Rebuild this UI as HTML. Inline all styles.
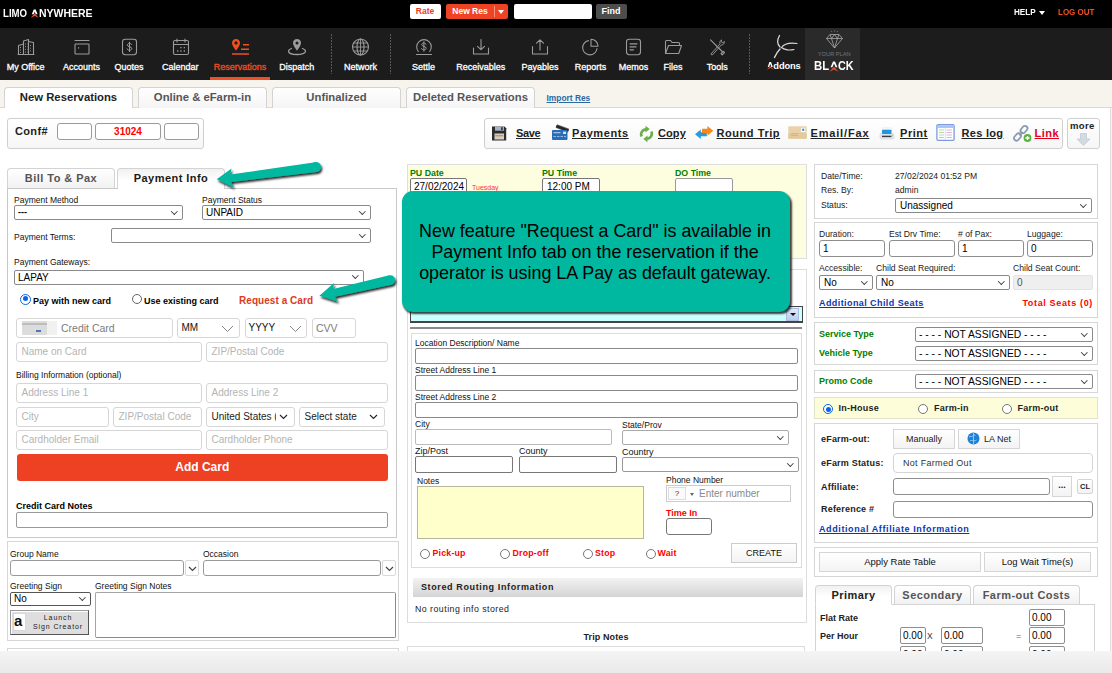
<!DOCTYPE html>
<html><head><meta charset="utf-8"><title>Limo Anywhere</title>
<style>
*{box-sizing:border-box;margin:0;padding:0}
html,body{width:1112px;height:673px;overflow:hidden;background:#fff;font-family:"Liberation Sans",sans-serif;}
#root{position:relative;width:1112px;height:673px;overflow:hidden;background:#fff;font-size:9px;color:#000}
#root *{position:absolute;white-space:nowrap}
.abs{position:absolute}
/* top */
#top{left:0;top:0;width:1112px;height:28px;background:#000}
#nav{left:0;top:28px;width:1112px;height:52px;background:#1c1c1c}
#strip{left:0;top:80px;width:1112px;height:28px;background:#f7f4ed;border-bottom:1px solid #d9d9d9}
.nl{color:#fff;font-size:9px;top:62px;text-align:center;width:70px;margin-left:-35px;-webkit-text-stroke:0.3px #fff}
.tab{top:87px;height:21px;border:1px solid #d3d3d3;border-bottom:0;border-radius:4px 4px 0 0;background:linear-gradient(#fff,#f5f5f5);font-weight:bold;font-size:11.3px;color:#555;text-align:center;line-height:19px}
.tab.on{background:#fff;color:#222}
.box{border:1px solid #d0d0d0;background:#fff}
.lb{font-size:8.5px;color:#111;letter-spacing:0}
.in{border:1px solid #8a8a8a;border-radius:2px;background:#fff;font-size:11px;line-height:13px;padding-left:3px}
.sel{border:1px solid #8a8a8a;border-radius:2px;background:#fff;font-size:11px;padding-left:3px}
.sel:after{content:"";position:absolute;right:5px;top:50%;width:3.6px;height:3.6px;border-right:1.1px solid #3a3a3a;border-bottom:1.1px solid #3a3a3a;transform:translateY(-4px) rotate(45deg)}
.ph{border:1px solid #d6d6d6;border-radius:3px;background:#fff;font-size:10px;color:#b4b4b4;padding-left:4.5px;line-height:18px;height:20px}
.vb{font-weight:bold;font-size:11px;letter-spacing:0.35px}
.u{text-decoration:underline}
.g{color:#008000;font-weight:bold}
.r{color:#f00;font-weight:bold}
.radio{width:10px;height:10px;border:1px solid #666;border-radius:50%;background:#fff}
.radio.on{border-color:#0a63e6}
.radio.on:after{content:"";position:absolute;left:1.5px;top:1.5px;width:5px;height:5px;border-radius:50%;background:#0a63e6}
.btn{border:1px solid #d5d5d5;background:linear-gradient(#fff,#f3f3f3);font-size:10px;text-align:center;color:#222}
.stab{border:1px solid #d3d3d3;border-bottom:0;border-radius:4px 4px 0 0;background:linear-gradient(#fff,#f1f1f1);font-weight:bold;font-size:11px;letter-spacing:0.45px;text-align:center;line-height:18px}
.stab.on{background:linear-gradient(#f1f1f1,#fff 60%)}
</style></head><body><div id="root">
<!-- TOP BAR -->
<div id="top"></div>
<div id="nav"></div>
<div id="strip"></div>

<div style="left:3px;top:7px;color:#fff;font-weight:bold;font-size:11px;line-height:13px;transform:scaleX(0.875);transform-origin:0 0">LIMO</div>
<div style="left:38.600px;top:7px;color:#fff;font-weight:bold;font-size:11px;line-height:13px;transform:scaleX(0.953);transform-origin:0 0">NYWHERE</div>
<svg style="left:30px;top:9px" width="10" height="10" viewBox="0 0 10 10"><path d="M1.800 5.200L3.700 0.600H5.700L7.600 5.200H5.700L4.700 2.700 3.700 5.200Z" fill="#fff"/><path d="M0.700 8.800L4.700 4.300 8.700 8.800 4.700 7.100Z" fill="#f04e23"/></svg>
<div style="left:409.5px;top:4px;width:31px;height:15.3px;background:#fff;border-radius:2px;color:#e8401f;font-weight:bold;font-size:8.5px;line-height:15.5px;text-align:center">Rate</div>
<div style="left:446px;top:4px;width:62px;height:15.300px;background:#ee4423;border-radius:2px"></div>
<div style="left:447px;top:4px;width:46px;height:15px;color:#fff;font-weight:bold;font-size:8.500px;line-height:15.500px;text-align:center">New Res</div>
<div style="left:493.500px;top:6px;width:1px;height:11px;background:#f7937c"></div>
<div style="left:497.500px;top:10px;width:0;height:0;border:3.500px solid transparent;border-top:4px solid #fff;border-bottom:0"></div>
<div style="left:513.500px;top:4px;width:78px;height:15.300px;background:#fff;border-radius:2px"></div>
<div style="left:595.500px;top:4px;width:31px;height:15.300px;background:#4d4d4d;border-radius:2px;color:#fff;font-weight:bold;font-size:9px;line-height:15px;text-align:center">Find</div>
<div style="left:1014px;top:6px;color:#fff;font-weight:bold;font-size:9px;line-height:12px;transform:scaleX(0.9);transform-origin:0 0">HELP</div>
<div style="left:1039px;top:11px;width:0;height:0;border:3.5px solid transparent;border-top:4px solid #fff;border-bottom:0"></div>
<div style="left:1057.500px;top:6px;color:#f04e23;font-weight:bold;font-size:9px;line-height:12px;transform:scaleX(0.89);transform-origin:0 0">LOG OUT</div>
<!--TOPCONTENT-->
<svg style="left:17px;top:38px" width="18" height="18" viewBox="0 0 18 18" fill="none" stroke="#9b9b9b" stroke-width="1.1" stroke-linecap="round" stroke-linejoin="round"><path d="M1.5 16.5V7.5l5-1.5v10.5M6.5 16.5V3l5-1.5v15M11.5 3.5l5 1v12M1 16.5h16"/><path d="M3 9.5h2M3 12h2M3 14.500h2M8 6h2.500M8 8.700h2.500M8 11.400h2.500M8 14.100h2.500M13 7.500h2M13 10.200h2M13 12.900h2" stroke-width="1" stroke-dasharray="0.9 1.1" stroke-linecap="butt"/></svg><svg style="left:73px;top:38px" width="18" height="18" viewBox="0 0 18 18" fill="none" stroke="#9b9b9b" stroke-width="1.1" stroke-linecap="round" stroke-linejoin="round"><path d="M2 2.500h14"/><rect x="2" y="6" width="14" height="10" rx="0.8"/><rect x="5" y="9.300" width="1.2" height="1.200" fill="#9b9b9b" stroke="none"/></svg><svg style="left:121px;top:38px" width="17" height="18" viewBox="0 0 17 18" fill="none" stroke="#9b9b9b" stroke-width="1.1" stroke-linecap="round" stroke-linejoin="round"><rect x="1.500" y="1.200" width="14" height="15.500" rx="2.600"/><path d="M10.600 6.700c-0.300-0.900-1.100-1.300-2.100-1.300-1.200 0-2.100 0.600-2.100 1.600 0 2.400 4.400 1.200 4.400 3.600 0 1-0.900 1.700-2.300 1.700-1.200 0-2.100-0.500-2.400-1.500M8.500 4.200v9.400" stroke-width="1"/></svg><svg style="left:172px;top:38px" width="18" height="18" viewBox="0 0 18 18" fill="none" stroke="#9b9b9b" stroke-width="1.1" stroke-linecap="round" stroke-linejoin="round"><rect x="1.500" y="2.500" width="15" height="14" rx="1.500"/><path d="M1.500 6.500h15M5 1v3M13 1v3"/><path d="M8.300 9.700h1.300M11.700 9.700h1.300M5 13h1.300M8.300 13h1.300M11.700 13h1.300" stroke-width="1.300" stroke-linecap="butt"/></svg><svg style="left:231px;top:38px" width="19" height="18" viewBox="0 0 19 18" fill="none" stroke="#f04e23" stroke-width="1.1" stroke-linecap="round" stroke-linejoin="round"><path d="M5 1C2.800 1 1 2.700 1 4.900 1 7.700 5 12.500 5 12.500S9 7.700 9 4.900C9 2.700 7.200 1 5 1z" fill="#f04e23" stroke="none"/><circle cx="5" cy="4.900" r="1.600" fill="#1c1c1c" stroke="none"/><path d="M12 6.700h6M10 11.200h8M1 16h17" stroke-width="1.500" stroke-linecap="butt"/></svg><svg style="left:287px;top:38px" width="20" height="18" viewBox="0 0 20 18" fill="none" stroke="#9b9b9b" stroke-width="1.1" stroke-linecap="round" stroke-linejoin="round"><path d="M10 1C7.800 1 6 2.700 6 4.900 6 7.700 10 12.500 10 12.500s4-4.800 4-7.600C14 2.700 12.200 1 10 1z" fill="#9b9b9b" stroke="none"/><circle cx="10" cy="4.900" r="1.500" fill="#1c1c1c" stroke="none"/><path d="M4.500 10.500C2.500 11.200 1.500 12.200 1.500 13.200c0 1.900 3.800 3.300 8.500 3.300s8.500-1.400 8.500-3.300c0-1-1-2-3-2.700" stroke-width="1.300"/></svg><svg style="left:351px;top:38px" width="19" height="18" viewBox="0 0 19 18" fill="none" stroke="#9b9b9b" stroke-width="1.1" stroke-linecap="round" stroke-linejoin="round"><circle cx="9.500" cy="9" r="8"/><ellipse cx="9.500" cy="9" rx="3.500" ry="8"/><path d="M1.500 9h16M2.600 5h13.800M2.600 13h13.800M9.500 1v16" stroke-width="0.900"/></svg><svg style="left:415px;top:38px" width="18" height="18" viewBox="0 0 18 18" fill="none" stroke="#9b9b9b" stroke-width="1.1" stroke-linecap="round" stroke-linejoin="round"><path d="M3.300 13.500A7.300 7.300 0 1 1 14.700 13.500"/><path d="M1.500 16.500h15"/><path d="M11 6.300c-0.300-0.900-1.100-1.300-2.100-1.300-1.200 0-2.100 0.600-2.100 1.600 0 2.400 4.400 1.200 4.400 3.600 0 1-0.900 1.700-2.300 1.700-1.200 0-2.100-0.500-2.400-1.500M8.900 3.800v9.400" stroke-width="1"/></svg><svg style="left:472px;top:38px" width="18" height="18" viewBox="0 0 18 18" fill="none" stroke="#9b9b9b" stroke-width="1.1" stroke-linecap="round" stroke-linejoin="round"><path d="M1.500 10v6h15v-6M9 1.500v10M5.500 8.300L9 11.700l3.500-3.400"/></svg><svg style="left:531px;top:38px" width="18" height="18" viewBox="0 0 18 18" fill="none" stroke="#9b9b9b" stroke-width="1.1" stroke-linecap="round" stroke-linejoin="round"><path d="M1.500 8.500v7.500h15V8.500M9 12V2M5.500 5.200L9 1.800l3.500 3.400"/></svg><svg style="left:581px;top:38px" width="18" height="18" viewBox="0 0 18 18" fill="none" stroke="#9b9b9b" stroke-width="1.1" stroke-linecap="round" stroke-linejoin="round"><path d="M7.500 2.600A7.200 7.200 0 1 0 16 10.500"/><path d="M10 1.200v7h7A7 7 0 0 0 10 1.200z"/></svg><svg style="left:625px;top:38px" width="17" height="18" viewBox="0 0 17 18" fill="none" stroke="#9b9b9b" stroke-width="1.1" stroke-linecap="round" stroke-linejoin="round"><rect x="1.500" y="1.200" width="14" height="15.500" rx="2.600"/><path d="M5 5.800h7M5 8.800h6M5 11.800h3.500" stroke-width="1.200"/></svg><svg style="left:664px;top:38px" width="19" height="18" viewBox="0 0 19 18" fill="none" stroke="#9b9b9b" stroke-width="1.1" stroke-linecap="round" stroke-linejoin="round"><path d="M1.500 15.500V3.500c0-0.600 0.400-1 1-1h4l1.500 2h6.500c0.600 0 1 0.400 1 1v1.500"/><path d="M1.500 15.500l3-8h13l-2.800 8z"/></svg><svg style="left:708px;top:38px" width="18" height="18" viewBox="0 0 18 18" fill="none" stroke="#9b9b9b" stroke-width="1.1" stroke-linecap="round" stroke-linejoin="round"><path d="M2.500 1.800L14.200 13.500M13 15.600l2.300-2.300 1.200 1.200-2.300 2.300z"/><path d="M3.300 15.700L12 5.800c-0.500-1.600 0.200-3.200 1.500-3.900l-0.300 2 1.600 0.800 1.600-1.200c0.300 1.600-0.900 3.300-3.100 3.500L4.500 16.800c-0.800 0.700-1.900-0.300-1.200-1.100z" stroke-width="0.900"/></svg><svg style="left:772px;top:34px" width="27" height="25" viewBox="0 0 27 25" fill="none" stroke="#d8d8d8" stroke-linecap="round"><path d="M7.500 1.500C5 6 5 10 8 13" stroke-width="1.300"/><path d="M25 9.500C18 8.500 12 10 9.500 13.500 12 16 18 16.500 22 15.500" stroke-width="1.200"/><path d="M8 15C6 17 4 20 2.500 23.500" stroke-width="1.400"/></svg><div style="left:805px;top:28px;width:55px;height:52px;background:#2a2a2a"></div><svg style="left:826px;top:30px" width="17" height="19" viewBox="0 0 17 19" fill="none" stroke="#a9a9a9" stroke-width="0.800" stroke-linejoin="round"><path d="M4 4.500h9l3.500 4L8.500 18 0.500 8.500zM0.500 8.500h16M5.500 8.500L8.500 18l3-9.500M4 4.500l1.500 4L8.500 4.500l3 4 1.500-4"/><path d="M8.500 0.500v1M5.500 1.200l0.400 0.900M11.500 1.200l-0.400 0.900" stroke-width="0.700"/></svg><div style="left:805px;top:50px;width:55px;text-align:center;font-size:5.700px;line-height:8px;color:#777;letter-spacing:0;padding-left:3.500px">YOUR PLAN</div><div style="left:814px;top:58.200px;color:#fff;font-weight:bold;font-size:13.500px;line-height:16px;transform:scaleX(0.84);transform-origin:0 0">BL</div><div style="left:838.200px;top:58.200px;color:#fff;font-weight:bold;font-size:13.500px;line-height:16px;transform:scaleX(0.80);transform-origin:0 0">CK</div><svg style="left:828px;top:60.700px" width="12" height="12" viewBox="0 0 12 12"><path d="M2.600 6.300L5 0.600H7L9.400 6.300H7.600L6 2.600 4.400 6.300Z" fill="#fff"/><path d="M1.400 10.800L6 5.800 10.600 10.800 6 8.400Z" fill="#f04e23"/></svg><div style="left:773.300px;top:60px;color:#fff;font-weight:bold;font-size:9.300px;line-height:13px;letter-spacing:-0.100px">ddons</div><svg style="left:766px;top:61px" width="9" height="10" viewBox="0 0 9 10"><path d="M1.700 6L3.400 1H5.100L6.800 6H5.300L4.250 2.800 3.200 6Z" fill="#fff"/><path d="M0.700 8.800L4.250 5.200 7.800 8.800 4.250 7.100Z" fill="#f04e23"/></svg><div style="left:331px;top:34px;width:1px;height:40px;background:repeating-linear-gradient(#575757 0 2px,transparent 2px 3px)"></div><div style="left:390px;top:34px;width:1px;height:40px;background:repeating-linear-gradient(#575757 0 2px,transparent 2px 3px)"></div><div style="left:749px;top:34px;width:1px;height:40px;background:repeating-linear-gradient(#575757 0 2px,transparent 2px 3px)"></div><div class="nl" style="left:25.7px">My Office</div><div class="nl" style="left:81.6px">Accounts</div><div class="nl" style="left:129.1px">Quotes</div><div class="nl" style="left:180.3px">Calendar</div><div class="nl" style="left:240.1px;color:#f04e23;-webkit-text-stroke-color:#f04e23">Reservations</div><div class="nl" style="left:296.7px">Dispatch</div><div class="nl" style="left:360.5px">Network</div><div class="nl" style="left:423.4px">Settle</div><div class="nl" style="left:480.8px">Receivables</div><div class="nl" style="left:540px">Payables</div><div class="nl" style="left:590.5px">Reports</div><div class="nl" style="left:633.6px">Memos</div><div class="nl" style="left:673.1px">Files</div><div class="nl" style="left:717.3px">Tools</div><div style="left:210px;top:77px;width:60px;height:3px;background:#f04e23"></div>
<!--NAV-->
<div class="tab on" style="left:4px;width:129px">New Reservations</div><div class="tab" style="left:138px;width:129px">Online &amp; eFarm-in</div><div class="tab" style="left:272px;width:129px">Unfinalized</div><div class="tab" style="left:406px;width:129px">Deleted Reservations</div><div style="left:546.500px;top:93px;font-size:8.400px;font-weight:bold;color:#2a6aa6;text-decoration:underline;line-height:10px">Import Res</div><div class="box" style="left:7px;top:118px;width:197px;height:31px;border-radius:3px;background:linear-gradient(#fff,#f6f6f6);border-color:#cfcfcf"></div><div class="vb" style="left:15px;top:125px;line-height:13px;color:#222">Conf#</div><div class="in" style="left:57px;top:123px;width:35px;height:17px;border-color:#9a9a9a;border-radius:3px"></div><div class="in" style="left:95px;top:123px;width:66px;height:17px;border-color:#9a9a9a;border-radius:3px"></div><div class="in" style="left:164px;top:123px;width:35px;height:17px;border-color:#9a9a9a;border-radius:3px"></div><div style="left:95px;top:123px;width:66px;height:17px;line-height:17px;text-align:center;color:#f00;font-weight:bold;font-size:10px">31024</div><div class="box" style="left:484px;top:118px;width:579px;height:31px;border-radius:3px;background:linear-gradient(#fff,#f6f6f6);border-color:#cfcfcf"></div><div class="box" style="left:1067px;top:118px;width:33px;height:31px;border-radius:3px;background:linear-gradient(#fff,#f6f6f6);border-color:#cfcfcf"></div><div class="vb u tb" style="left:516px;top:127px;line-height:13px;color:#222;letter-spacing:-0.33px">Save</div><div class="vb u tb" style="left:572px;top:127px;line-height:13px;color:#222;letter-spacing:0.60px">Payments</div><div class="vb u tb" style="left:658px;top:127px;line-height:13px;color:#222;letter-spacing:0.10px">Copy</div><div class="vb u tb" style="left:716.5px;top:127px;line-height:13px;color:#222;letter-spacing:0.56px">Round Trip</div><div class="vb u tb" style="left:810.5px;top:127px;line-height:13px;color:#222;letter-spacing:0.83px">Email/Fax</div><div class="vb u tb" style="left:900px;top:127px;line-height:13px;color:#222;letter-spacing:0.55px">Print</div><div class="vb u tb" style="left:961.5px;top:127px;line-height:13px;color:#222;letter-spacing:0.31px">Res log</div><div class="vb u tb" style="left:1034.5px;top:127px;line-height:13px;color:#e2001a;letter-spacing:0.47px">Link</div><div class="vb" style="left:1070px;top:120px;line-height:12px;font-size:9.5px;color:#222">more</div><svg style="left:1076px;top:133px" width="15" height="13" viewBox="0 0 15 13"><path d="M4.500 0.500h6v5.500h3.500L7.500 12.500 1 6h3.500z" fill="#d5dae1" stroke="#c3cad3" stroke-width="0.800"/></svg>
<svg style="left:491px;top:126px" width="16" height="15" viewBox="0 0 16 15"><path d="M1 0.500h12.500L15.200 2.200V14.500H1z" fill="#2d2d30"/><rect x="4" y="0.500" width="9" height="4.200" fill="#a9b3c2"/><rect x="10" y="1.200" width="1.800" height="2.800" fill="#3a3f4a"/><rect x="3.500" y="7.500" width="9.500" height="6" fill="#d0d0d0"/><rect x="4.300" y="9" width="8" height="1.400" fill="#f08a24"/></svg><svg style="left:551px;top:123px" width="20" height="18" viewBox="0 0 20 18"><g transform="rotate(21 11 5)"><rect x="5" y="3.200" width="13" height="4" rx="0.600" fill="#6a6a6a"/><rect x="5" y="4" width="13" height="2.400" fill="#262626"/></g><rect x="1" y="7" width="15.500" height="10" rx="1" fill="#2a6db5"/><rect x="2.500" y="9" width="7" height="1.300" fill="#9cc3ee"/><rect x="12" y="8.600" width="3" height="2.400" fill="#cfe2f7"/><path d="M2.500 13.500h2.500M6 13.500h2.500M9.500 13.500h2.500M13 13.500h2" stroke="#8fbaea" stroke-width="1"/></svg><svg style="left:639px;top:125px" width="15" height="18" viewBox="0 0 15 18" fill="none" stroke="#6ab04c" stroke-width="2.700"><path d="M2.700 11.500A5 5 0 0 1 7.200 4.300"/><path d="M12.300 6.500A5 5 0 0 1 7.800 13.700"/><path d="M6.500 0.800l4.200 3.300-4.200 3.400z" fill="#6ab04c" stroke="none"/><path d="M8.500 17.200l-4.200-3.300 4.200-3.400z" fill="#6ab04c" stroke="none"/></svg><svg style="left:694px;top:125px" width="20" height="15" viewBox="0 0 20 15"><path d="M1 9.200L6.800 4.500v2.800h6v4h-6v2.800z" fill="#2a9ae0"/><path d="M19.200 5.800L13.400 0.900v2.800H8v4.200h5.400v2.800z" fill="#f28a1e"/></svg><svg style="left:788px;top:126px" width="19" height="13" viewBox="0 0 19 13"><rect x="0.300" y="0.300" width="18.400" height="12.400" rx="1" fill="#e9d2aa"/><rect x="0.300" y="7" width="18.400" height="5.700" rx="1" fill="#e3c99c"/><rect x="13.200" y="1.800" width="4" height="4.200" fill="#fff"/><circle cx="15.200" cy="3.700" r="1.200" fill="#3b8fd6"/><path d="M3 7.600h7M3 9.600h7" stroke="#e5a5a0" stroke-width="1"/></svg><svg style="left:879px;top:126px" width="16" height="15" viewBox="0 0 16 15"><path d="M3 1h10l1 4H2z" fill="#f1f4f8"/><rect x="0.500" y="7" width="15" height="6.500" rx="2" fill="#dde3ea"/><rect x="3" y="3.800" width="9.500" height="4.200" rx="0.800" fill="#2196d8"/><rect x="3" y="9.700" width="9.500" height="1.400" fill="#3a3a3a"/><circle cx="13.500" cy="9" r="0.600" fill="#8bc34a"/></svg><svg style="left:936px;top:124px" width="19" height="17" viewBox="0 0 19 17"><rect x="0.900" y="0.700" width="17.200" height="15.600" rx="1.200" fill="#fff" stroke="#7b9be0" stroke-width="1.300"/><rect x="1.500" y="1.300" width="16" height="2.600" fill="#a9c0f0"/><path d="M3 6h5M3 8.500h5M3 11h5M3 13.500h5" stroke="#b7d7b0" stroke-width="1"/><path d="M10.500 6h5.500M10.500 8.500h5.500M10.500 11h5.500M10.500 13.500h5.500" stroke="#d9b7d7" stroke-width="1"/><path d="M9.300 4v12" stroke="#cfd8ee" stroke-width="0.800"/></svg><svg style="left:1012px;top:124px" width="21" height="19" viewBox="0 0 21 19"><g fill="none" stroke="#8a9bb2" stroke-width="1.800"><rect x="9.500" y="1.500" width="5" height="8" rx="2.500" transform="rotate(40 12 5.500)"/><rect x="3" y="9" width="5" height="8" rx="2.500" transform="rotate(40 5.500 13)"/><path d="M7.500 11.500l3-3.600"/></g><circle cx="15.500" cy="14" r="3.900" fill="#5bb043"/><path d="M13.400 14h4.200M15.500 11.900v4.200" stroke="#fff" stroke-width="1.400"/></svg><!--TABS-->
<div class="stab" style="left:7px;top:168px;width:108px;height:21px;color:#555">Bill To &amp; Pax</div><div class="stab on" style="left:117px;top:168px;width:108px;height:21px;color:#1a1a1a">Payment Info</div><div class="box" style="left:7px;top:188px;width:390px;height:350px;border-color:#c9c9c9"></div><div style="left:118px;top:188px;width:106px;height:1px;background:#fff"></div><div class="lb" style="left:14px;top:195px;line-height:11px;">Payment Method</div><div class="sel" style="left:14px;top:205px;width:169px;height:15px;line-height:13px;font-size:9px"><b>---</b></div><div class="lb" style="left:202px;top:195px;line-height:11px;">Payment Status</div><div class="sel" style="left:202px;top:205px;width:169px;height:15px;line-height:13px;font-size:10px">UNPAID</div><div class="lb" style="left:14px;top:232px;line-height:11px;">Payment Terms:</div><div class="sel" style="left:111px;top:228px;width:260px;height:15px;line-height:13px;"></div><div class="lb" style="left:14px;top:257px;line-height:11px;">Payment Gateways:</div><div class="sel" style="left:14px;top:269.5px;width:350px;height:15px;line-height:13px;font-size:10px">LAPAY</div><div class="radio on" style="left:20px;top:293.500px;width:11px;height:11px"></div><div style="left:33px;top:295.500px;font-weight:bold;font-size:9px;line-height:11px">Pay with new card</div><div class="radio" style="left:131.500px;top:293.500px;width:10.500px;height:10.500px"></div><div style="left:144px;top:295.500px;font-weight:bold;font-size:9px;line-height:11px">Use existing card</div><div style="left:239px;top:294px;font-size:10px;font-weight:bold;line-height:13px;color:#dc3a1d;letter-spacing:0.050px">Request a Card</div><div class="ph" style="left:16px;top:318px;width:157px;"></div><div style="left:22px;top:321px;width:25px;height:14px;background:#dcdcdc;border-radius:1px"></div><div style="left:22px;top:323px;width:25px;height:2px;background:#bdbdbd"></div><div style="left:36px;top:330px;width:5px;height:1.5px;background:#4a78c0"></div><div style="left:47px;top:321px;width:10px;height:14px;background:#f1f1f1"></div><div style="left:61px;top:318px;font-size:10.500px;line-height:20px;color:#7c7c7c">Credit Card</div><div class="ph" style="left:176.5px;top:318px;width:63px;color:#111;padding-left:4px">MM</div><svg style="left:221px;top:324.500px" width="13" height="8" viewBox="0 0 13 8" fill="none" stroke="#777" stroke-width="0.9"><path d="M1 1l5.500 5.500L12 1"/></svg><div class="ph" style="left:244.5px;top:318px;width:62px;color:#111;padding-left:3px">YYYY</div><svg style="left:288.500px;top:324.500px" width="13" height="8" viewBox="0 0 13 8" fill="none" stroke="#777" stroke-width="0.9"><path d="M1 1l5.500 5.500L12 1"/></svg><div class="ph" style="left:311.5px;top:318px;width:44px;color:#7c7c7c;font-size:10.500px;padding-left:3.500px">CVV</div><div class="ph" style="left:16px;top:342px;width:186px;">Name on Card</div><div class="ph" style="left:206px;top:342px;width:182px;">ZIP/Postal Code</div><div class="lb" style="left:16px;top:370px;line-height:11px;">Billing Information (optional)</div><div class="ph" style="left:16px;top:383px;width:186px;">Address Line 1</div><div class="ph" style="left:206px;top:383px;width:182px;">Address Line 2</div><div class="ph" style="left:16px;top:407px;width:93px;">City</div><div class="ph" style="left:113px;top:407px;width:89px;">ZIP/Postal Code</div><div class="ph" style="left:206px;top:407px;width:89px;color:#222;font-size:10px">United States <span style="position:static;display:inline-block;width:2px;overflow:hidden;vertical-align:bottom">(</span></div><svg style="left:279px;top:414px" width="9" height="6" viewBox="0 0 9 6" fill="none" stroke="#222" stroke-width="1.1"><path d="M1 1l3.500 3.500L8 1"/></svg><div class="ph" style="left:299px;top:407px;width:86px;color:#222;font-size:10px">Select state</div><svg style="left:369px;top:414px" width="9" height="6" viewBox="0 0 9 6" fill="none" stroke="#222" stroke-width="1.1"><path d="M1 1l3.500 3.500L8 1"/></svg><div class="ph" style="left:16px;top:430px;width:186px;">Cardholder Email</div><div class="ph" style="left:206px;top:430px;width:182px;">Cardholder Phone</div><div style="left:16.500px;top:453.500px;width:371.500px;height:27px;background:#ee4023;border-radius:3px;color:#fff;font-weight:bold;font-size:12px;line-height:27px;text-align:center">Add Card</div><div style="left:16px;top:501px;font-weight:bold;font-size:9px;line-height:11px">Credit Card Notes</div><div class="in" style="left:16px;top:512px;width:372px;height:16px;line-height:14px;border-color:#999"></div><div class="box" style="left:7px;top:541px;width:392px;height:100px;border-color:#d6d6d6"></div><div class="lb" style="left:10px;top:549px;line-height:11px;">Group Name</div><div class="in" style="left:10px;top:560px;width:174px;height:16px;line-height:14px;border-color:#999;border-radius:3px"></div><div style="left:185px;top:560px;width:14px;height:16px;border:1px solid #d9d9d9;background:#fff;border-radius:2px"></div><svg style="left:187.5px;top:565.5px" width="9" height="6" viewBox="0 0 9 6" fill="none" stroke="#444" stroke-width="1.200"><path d="M1 1l3.500 3.500L8 1"/></svg><div class="lb" style="left:203px;top:549px;line-height:11px;">Occasion</div><div class="in" style="left:203px;top:560px;width:178px;height:16px;line-height:14px;border-color:#999;border-radius:3px"></div><div style="left:382px;top:560px;width:14px;height:16px;border:1px solid #d9d9d9;background:#fff;border-radius:2px"></div><svg style="left:384.5px;top:565.5px" width="9" height="6" viewBox="0 0 9 6" fill="none" stroke="#444" stroke-width="1.200"><path d="M1 1l3.500 3.500L8 1"/></svg><div class="lb" style="left:10px;top:581px;line-height:11px;">Greeting Sign</div><div class="lb" style="left:95px;top:581px;line-height:11px;">Greeting Sign Notes</div><div class="sel" style="left:10px;top:592px;width:81px;height:14px;line-height:12px;font-size:10px;border-color:#555">No</div><div class="in" style="left:95px;top:591.5px;width:301px;height:46.5px;line-height:44.5px;border-color:#a5a5a5;border-right-color:#8a8a8a;border-bottom-color:#8a8a8a;border-radius:2px"></div><div style="left:10px;top:610px;width:79px;height:25px;border:1px solid #9a9a9a;border-right-color:#555;border-bottom-color:#555;background:#dedede;box-shadow:inset 1px 1px 0 #fff"></div><div style="left:13px;top:613px;width:13px;height:18px;background:#fff;border:1px solid #d8d8d8"></div><div style="left:14px;top:612px;font-weight:bold;font-size:15px;line-height:18px;color:#111">a</div><div style="left:28px;top:613px;width:60px;text-align:center;font-size:7px;line-height:9px;color:#222;letter-spacing:0.900px">Launch<br>Sign Creator</div><div class="box" style="left:7px;top:648px;width:392px;height:40px;border-color:#d6d6d6"></div>
<div class="box" style="left:407px;top:269px;width:400px;height:354px;border-color:#dcdcdc"></div><div style="left:407px;top:164px;width:400px;height:95px;background:#fdfddf;border:1px solid #dedede"></div><div class="g" style="left:410px;top:168px;font-size:8.8px;line-height:11px">PU Date</div><div class="g" style="left:542px;top:168px;font-size:8.8px;line-height:11px">PU Time</div><div class="g" style="left:675px;top:168px;font-size:8.8px;line-height:11px">DO Time</div><div class="in" style="left:410px;top:178px;width:57px;height:17px;line-height:15px;font-size:10px;border-color:#777;padding-left:3px">27/02/2024</div><div style="left:472px;top:183px;font-size:7px;line-height:9px;color:#f33">Tuesday</div><div class="in" style="left:542px;top:178px;width:58px;height:17px;line-height:15px;font-size:10px;border-color:#777;padding-left:4px">12:00 PM</div><div class="in" style="left:675px;top:178px;width:58px;height:18px;line-height:16px;border-color:#999"></div><div style="left:410px;top:306px;width:393px;height:17px;background:#ccffff;border:1px solid #444;border-bottom-width:2px"></div><div style="left:786px;top:308px;width:13px;height:13px;background:linear-gradient(#dfe9fb,#b9cdf0);border:1px solid #a9bde0"></div><div style="left:790px;top:313px;width:0;height:0;border:3px solid transparent;border-top:3.5px solid #111;border-bottom:0"></div><div style="left:410px;top:327px;width:392px;height:2px;background:#8a8a8a"></div><div class="box" style="left:411px;top:333px;width:391px;height:235px;border-color:#dcdcdc"></div><div class="lb" style="left:415px;top:338px;line-height:11px;">Location Description/ Name</div><div class="in" style="left:415px;top:348px;width:383px;height:16px;line-height:14px;border-color:#8a8a8a"></div><div class="lb" style="left:415px;top:365px;line-height:11px;">Street Address Line 1</div><div class="in" style="left:415px;top:375px;width:383px;height:16px;line-height:14px;border-color:#8a8a8a"></div><div class="lb" style="left:415px;top:392px;line-height:11px;">Street Address Line 2</div><div class="in" style="left:415px;top:402px;width:383px;height:16px;line-height:14px;border-color:#8a8a8a"></div><div class="lb" style="left:415px;top:419px;line-height:11px;">City</div><div class="in" style="left:415px;top:429px;width:197px;height:16px;line-height:14px;border-color:#bbb"></div><div class="lb" style="left:622px;top:420px;line-height:11px;">State/Prov</div><div class="sel" style="left:622px;top:430px;width:167px;height:15px;line-height:13px;border-color:#aaa"></div><div class="lb" style="left:415px;top:446px;line-height:11px;font-size:9px">Zip/Post</div><div class="in" style="left:415px;top:456px;width:98px;height:17px;line-height:15px;border-color:#777"></div><div class="lb" style="left:519px;top:446px;line-height:11px;font-size:9px">County</div><div class="in" style="left:519px;top:456px;width:98px;height:17px;line-height:15px;border-color:#777"></div><div class="lb" style="left:622px;top:447px;line-height:11px;font-size:9px">Country</div><div class="sel" style="left:622px;top:457px;width:177px;height:15px;line-height:13px;border-color:#999"></div><div class="lb" style="left:417px;top:476px;line-height:11px;">Notes</div><div style="left:417px;top:486px;width:227px;height:53px;background:#ffffcc;border:1px solid #b5b5a0"></div><div class="lb" style="left:666px;top:475px;line-height:11px;">Phone Number</div><div style="left:666px;top:485px;width:125px;height:17px;border:1px solid #ccc;background:#fff"></div><div style="left:668px;top:487px;width:18px;height:13px;border:1px solid #ddd;background:#fafafa;font-size:8px;line-height:12px;text-align:center;color:#333">?</div><div style="left:690px;top:493px;width:0;height:0;border:2.500px solid transparent;border-top:3px solid #666;border-bottom:0"></div><div style="left:699px;top:486px;font-size:10px;line-height:15px;color:#8a8a8a">Enter number</div><div class="r" style="left:666px;top:508px;font-size:9px;line-height:11px">Time In</div><div class="in" style="left:666px;top:518px;width:46px;height:17px;line-height:15px;border-color:#777;border-radius:3px"></div><div class="radio" style="left:420px;top:549px;border-color:#777"></div><div class="r" style="left:432.5px;top:548px;font-size:8.800px;line-height:11px;letter-spacing:0.200px">Pick-up</div><div class="radio" style="left:500px;top:549px;border-color:#777"></div><div class="r" style="left:512.5px;top:548px;font-size:8.800px;line-height:11px;letter-spacing:0.200px">Drop-off</div><div class="radio" style="left:582.5px;top:549px;border-color:#777"></div><div class="r" style="left:595px;top:548px;font-size:8.800px;line-height:11px;letter-spacing:0.200px">Stop</div><div class="radio" style="left:646px;top:549px;border-color:#777"></div><div class="r" style="left:657.5px;top:548px;font-size:8.800px;line-height:11px;letter-spacing:0.200px">Wait</div><div class="btn" style="left:731px;top:543px;width:66px;height:20px;line-height:18px;font-size:9px;border-color:#ccc;color:#111">CREATE</div><div style="left:413px;top:578px;width:390px;height:19px;background:linear-gradient(#f2f2f2,#d4d4d4)"></div><div style="left:421px;top:582px;font-weight:bold;font-size:9px;line-height:11px;letter-spacing:0.620px;color:#222">Stored Routing Information</div><div style="left:415px;top:604px;font-size:8.800px;line-height:11px;letter-spacing:0.470px;color:#222">No routing info stored</div><div style="left:406px;top:632px;width:400px;text-align:center;font-weight:bold;font-size:9px;line-height:11px;letter-spacing:0.100px;color:#222">Trip Notes</div><div class="box" style="left:407px;top:646px;width:398px;height:40px;border-color:#dcdcdc"></div>
<div class="box" style="left:814px;top:164px;width:284px;height:55px;border-color:#d6d6d6"></div><div style="left:821px;top:170.5px;font-size:8.600px;line-height:11px;color:#222;">Date/Time:</div><div style="left:895px;top:170.5px;font-size:8.600px;line-height:11px;color:#222;">27/02/2024 01:52 PM</div><div style="left:821px;top:184.5px;font-size:8.600px;line-height:11px;color:#222;">Res. By:</div><div style="left:895px;top:184.5px;font-size:8.600px;line-height:11px;color:#222;">admin</div><div style="left:821px;top:199.5px;font-size:8.600px;line-height:11px;color:#222;">Status:</div><div class="sel" style="left:895px;top:198px;width:197px;height:15px;line-height:13px;font-size:10px;padding-left:4px">Unassigned</div><div class="box" style="left:814px;top:222px;width:284px;height:96px;border-color:#d6d6d6"></div><div style="left:819px;top:228.5px;font-size:8.600px;line-height:11px;color:#222;">Duration:</div><div class="in" style="left:819px;top:240px;width:66px;height:17px;line-height:15px;font-size:10px;border-color:#8e8e8e;border-radius:3px;padding-left:3px">1</div><div style="left:889px;top:228.5px;font-size:8.600px;line-height:11px;color:#222;">Est Drv Time:</div><div class="in" style="left:889px;top:240px;width:66px;height:17px;line-height:15px;font-size:10px;border-color:#8e8e8e;border-radius:3px;padding-left:3px"></div><div style="left:958px;top:228.5px;font-size:8.600px;line-height:11px;color:#222;"># of Pax:</div><div class="in" style="left:958px;top:240px;width:66px;height:17px;line-height:15px;font-size:10px;border-color:#8e8e8e;border-radius:3px;padding-left:3px">1</div><div style="left:1027px;top:228.5px;font-size:8.600px;line-height:11px;color:#222;">Luggage:</div><div class="in" style="left:1027px;top:240px;width:66px;height:17px;line-height:15px;font-size:10px;border-color:#8e8e8e;border-radius:3px;padding-left:3px">0</div><div style="left:819px;top:262.5px;font-size:8.600px;line-height:11px;color:#222;">Accessible:</div><div style="left:876px;top:262.5px;font-size:8.600px;line-height:11px;color:#222;">Child Seat Required:</div><div style="left:1013px;top:262.5px;font-size:8.600px;line-height:11px;color:#222;">Child Seat Count:</div><div class="sel" style="left:819px;top:275px;width:54px;height:15px;line-height:13px;font-size:10px;padding-left:4px">No</div><div class="sel" style="left:876px;top:275px;width:134px;height:15px;line-height:13px;font-size:10px;padding-left:4px">No</div><div style="left:1013px;top:275px;width:80px;height:15px;background:#efefef;border:1px solid #e2e2e2;border-radius:2px;font-size:10px;line-height:13px;padding-left:3px;color:#555">0</div><div class="u" style="left:819px;top:298px;font-weight:bold;font-size:9px;line-height:11px;letter-spacing:0.42px;color:#0a37b0">Additional Child Seats</div><div class="r" style="left:993px;top:298px;width:100px;text-align:right;font-size:9px;line-height:11px;letter-spacing:0.650px">Total Seats (0)</div><div class="box" style="left:814px;top:322px;width:284px;height:43px;border-color:#d6d6d6"></div><div class="g" style="left:819px;top:329px;font-size:9px;line-height:11px;letter-spacing:0">Service Type</div><div class="g" style="left:819px;top:348px;font-size:9px;line-height:11px;letter-spacing:0">Vehicle Type</div><div class="sel" style="left:915px;top:327px;width:178px;height:15px;line-height:13px;font-size:10.3px">- - - - NOT ASSIGNED - - - -</div><div class="sel" style="left:915px;top:346px;width:178px;height:15px;line-height:13px;font-size:10.3px">- - - - NOT ASSIGNED - - - -</div><div class="box" style="left:814px;top:370px;width:284px;height:23px;border-color:#d6d6d6"></div><div class="g" style="left:819px;top:376px;font-size:9px;line-height:11px;letter-spacing:0">Promo Code</div><div class="sel" style="left:915px;top:374px;width:178px;height:15px;line-height:13px;font-size:10.3px">- - - - NOT ASSIGNED - - - -</div><div style="left:814px;top:397px;width:284px;height:22px;background:#fdfdda;border:1px solid #e2e2c8"></div><div class="radio on" style="left:823px;top:404px"></div><div class="radio" style="left:918px;top:404px;border-color:#777"></div><div class="radio" style="left:1002px;top:404px;border-color:#777"></div><div style="left:838.5px;top:403px;font-weight:bold;font-size:9px;line-height:11px;letter-spacing:0.250px;color:#222">In-House</div><div style="left:934px;top:403px;font-weight:bold;font-size:9px;line-height:11px;letter-spacing:0.250px;color:#222">Farm-in</div><div style="left:1017.5px;top:403px;font-weight:bold;font-size:9px;line-height:11px;letter-spacing:0.250px;color:#222">Farm-out</div><div class="box" style="left:814px;top:423px;width:284px;height:120px;border-color:#d6d6d6"></div><div style="left:821px;top:434px;font-weight:bold;font-size:9px;line-height:11px;letter-spacing:0.200px;color:#222">eFarm-out:</div><div style="left:821px;top:457.5px;font-weight:bold;font-size:9px;line-height:11px;letter-spacing:0.200px;color:#222">eFarm Status:</div><div style="left:821px;top:481.5px;font-weight:bold;font-size:9px;line-height:11px;letter-spacing:0.200px;color:#222">Affiliate:</div><div style="left:821px;top:504px;font-weight:bold;font-size:9px;line-height:11px;letter-spacing:0.200px;color:#222">Reference #</div><div class="btn" style="left:893px;top:429px;width:62px;height:20px;line-height:18px;font-size:9px">Manually</div><div class="btn" style="left:958px;top:429px;width:62px;height:20px;line-height:18px;font-size:9px;padding-left:17px">LA Net</div><svg style="left:967px;top:432px" width="13" height="13" viewBox="0 0 13 13"><circle cx="6.500" cy="6.500" r="6" fill="#1e7fd6"/><path d="M2 5c1.500-1 2.500 0 3.500-1s2-1.500 3-0.500M3 8.500c1 0.500 2-0.500 3 0s2.500 0.500 3.500-0.500M6.500 1v11" stroke="#9fd0f5" stroke-width="0.900" fill="none"/></svg><div style="left:893px;top:453px;width:200px;height:20px;border:1px solid #d4d4d4;border-radius:4px;background:#fff;font-size:9px;line-height:18px;padding-left:9px;color:#333;letter-spacing:0.300px">Not Farmed Out</div><div class="in" style="left:893px;top:478px;width:157px;height:17px;line-height:15px;border-color:#8e8e8e;border-radius:3px"></div><div class="btn" style="left:1052px;top:476px;width:20px;height:21px;line-height:16px;font-size:9px;font-weight:bold">...</div><div class="btn" style="left:1077px;top:479px;width:16px;height:15px;line-height:13px;font-size:7.500px;font-weight:bold;border-radius:2px">CL</div><div class="in" style="left:893px;top:501px;width:200px;height:17px;line-height:15px;border-color:#8e8e8e;border-radius:3px"></div><div class="u" style="left:819px;top:524px;font-weight:bold;font-size:9px;line-height:11px;letter-spacing:0.600px;color:#0a37b0">Additional Affiliate Information</div><div class="box" style="left:814px;top:547px;width:284px;height:30px;border-color:#d6d6d6"></div><div class="btn" style="left:819px;top:552px;width:162px;height:20px;line-height:18px;font-size:9.500px;color:#111">Apply Rate Table</div><div class="btn" style="left:984px;top:552px;width:107px;height:20px;line-height:18px;font-size:9.500px;color:#111">Log Wait Time(s)</div><div class="box" style="left:815px;top:604px;width:280px;height:80px;border-color:#d3d3d3"></div><div class="stab on" style="left:815px;top:585px;width:77px;height:20px;color:#222;line-height:18px;border-bottom:1px solid #fff">Primary</div><div class="stab" style="left:894px;top:585px;width:77px;height:19px;color:#555;line-height:18px">Secondary</div><div class="stab" style="left:973px;top:585px;width:107px;height:19px;color:#555;line-height:18px">Farm-out Costs</div><div style="left:820px;top:613px;font-weight:bold;font-size:9px;line-height:11px;color:#222">Flat Rate</div><div style="left:820px;top:631px;font-weight:bold;font-size:9px;line-height:11px;color:#222">Per Hour</div><div class="in" style="left:1029px;top:609px;width:36px;height:17px;line-height:15px;font-size:10px;border-color:#8e8e8e;border-radius:2px;padding-left:2px">0.00</div><div class="in" style="left:900px;top:627px;width:26px;height:17px;line-height:15px;font-size:10px;border-color:#8e8e8e;border-radius:2px;padding-left:2px">0.00</div><div class="in" style="left:941px;top:627px;width:42px;height:17px;line-height:15px;font-size:10px;border-color:#8e8e8e;border-radius:2px;padding-left:2px">0.00</div><div class="in" style="left:1029px;top:627px;width:36px;height:17px;line-height:15px;font-size:10px;border-color:#8e8e8e;border-radius:2px;padding-left:2px">0.00</div><div class="in" style="left:900px;top:646px;width:26px;height:17px;line-height:15px;font-size:10px;border-color:#8e8e8e;border-radius:2px;padding-left:2px">0.00</div><div class="in" style="left:941px;top:646px;width:42px;height:17px;line-height:15px;font-size:10px;border-color:#8e8e8e;border-radius:2px;padding-left:2px">0.00</div><div class="in" style="left:1029px;top:646px;width:36px;height:17px;line-height:15px;font-size:10px;border-color:#8e8e8e;border-radius:2px;padding-left:2px">0.00</div><div style="left:927px;top:631px;font-size:8.500px;line-height:11px;color:#333">X</div><div style="left:1016px;top:631px;font-size:9px;line-height:11px;color:#666">=</div><div style="left:1110px;top:108px;width:1px;height:545px;background:#dedede"></div><div style="left:1111px;top:108px;width:1px;height:545px;background:#f7f4ed"></div>
<div style="left:402px;top:191px;width:388px;height:121px;background:#00b8a0;border-radius:11px;box-shadow:1.500px 2px 2px rgba(0,0,0,0.75)"></div><div style="left:401px;top:221px;width:388px;text-align:center;font-size:17.900px;line-height:21px;color:#000;white-space:normal">New feature "Request a Card" is available in<br>Payment Info tab on the reservation if the<br>operator is using LA Pay as default gateway.</div><div style="left:0;top:651px;width:1112px;height:22px;background:linear-gradient(#f4f4f4,#e9e9e9)"></div>
<svg style="left:0;top:0;pointer-events:none" width="1112" height="673" viewBox="0 0 1112 673"><defs><filter id="ds" x="-10%" y="-30%" width="120%" height="170%"><feDropShadow dx="1.2" dy="2" stdDeviation="0.9" flood-color="#000" flood-opacity="0.85"/></filter></defs><g filter="url(#ds)"><polygon points="315.40,162.14 230.22,174.62 231.48,168.42 216.70,179.20 233.82,187.68 231.11,181.96 316.60,172.06" fill="#00b8a0"/><circle cx="316" cy="167.1" r="5.0" fill="#00b8a0"/></g><g filter="url(#ds)"><polygon points="389.26,275.36 333.19,288.92 333.94,283.02 319.40,295.70 338.06,301.78 334.91,296.74 391.34,284.84" fill="#00b8a0"/><circle cx="390.3" cy="280.1" r="4.85" fill="#00b8a0"/></g></svg></div></body></html>
